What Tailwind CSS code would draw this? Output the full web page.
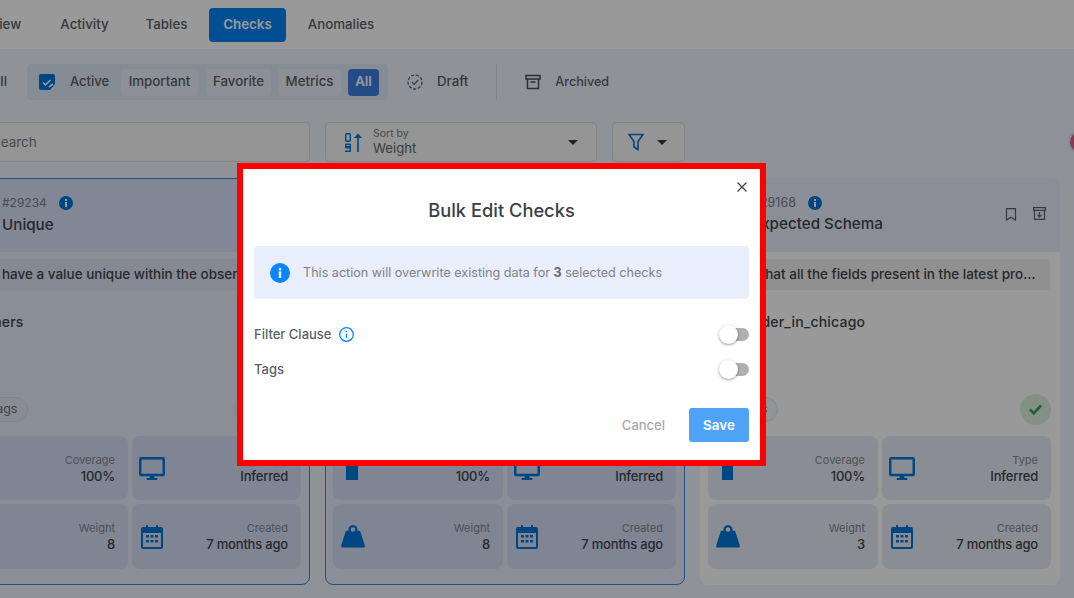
<!doctype html>
<html>
<head>
<meta charset="utf-8">
<script src="https://cdn.jsdelivr.net/npm/@tailwindcss/browser@4"></script>
</head>
<body>
<div class="relative w-[1074px] h-[598px] overflow-hidden bg-[#eff6fc] font-['Inter','Liberation_Sans',sans-serif] text-[#3f444a]">

  <!-- top tabs -->
  <nav class="flex h-[49px] bg-white pt-2 overflow-hidden">
    <div class="flex gap-[7px] ml-[-56px] text-[13.3px] font-medium text-[#5a5f66]">
      <span class="h-[34px] w-[94px] flex items-center justify-center">Overview</span>
      <span class="h-[34px] w-[79px] flex items-center justify-center">Activity</span>
      <span class="h-[34px] w-[71px] flex items-center justify-center">Tables</span>
      <span class="h-[34px] w-[77px] flex items-center justify-center rounded bg-[#0084f4] text-white font-semibold">Checks</span>
      <span class="h-[34px] w-[96px] flex items-center justify-center">Anomalies</span>
    </div>
  </nav>

  <!-- filter row -->
  <div class="flex items-center h-[36px] mt-[15px] text-[13.3px] font-medium text-[#5a5f66]">
    <span class="w-[7px] overflow-hidden flex justify-end mr-[20px] pb-[1px]"><span>All</span></span>
    <div class="flex items-center h-[36px] w-[361px] rounded bg-[#dfe9f7] pl-3">
      <svg class="w-4 h-4 mr-[15px] shrink-0" viewBox="0 0 16 16"><path fill="#0075e0" d="M2 0h12a2 2 0 0 1 2 2v8l-5 6H2a2 2 0 0 1-2-2V2a2 2 0 0 1 2-2z"/><path d="M4 8.500l2.400 2.300L11.500 6" fill="none" stroke="#fff" stroke-width="1.600"/><path d="M10 13l4-3" stroke="#fff" stroke-width="1.600"/></svg>
      <span class="w-[51px] text-[13px] pb-[1px]">Active</span>
      <span class="h-[27px] w-[77px] pb-[1px] rounded bg-[#ebf1fa] flex items-center justify-center">Important</span>
      <span class="h-[27px] w-[65px] pb-[1px] ml-2 rounded bg-[#ebf1fa] flex items-center justify-center">Favorite</span>
      <span class="h-[27px] w-[63px] pb-[1px] ml-[7px] rounded bg-[#ebf1fa] flex items-center justify-center">Metrics</span>
      <span class="h-[27px] w-[31px] pb-[1px] ml-[7px] rounded bg-[#3f7de0] text-white font-semibold flex items-center justify-center">All</span>
    </div>
    <svg class="w-4 h-4 ml-[19px] mr-[14px] shrink-0" viewBox="0 0 16 16" fill="none" stroke="#4f6a8a" stroke-width="1.300"><circle cx="8" cy="8" r="7" stroke-dasharray="3.200 1.600"/><path d="M5 8.200l2.200 2.200L11.200 6"/></svg>
    <span class="pb-[1px]">Draft</span>
    <span class="w-px h-[36px] bg-[#d5dbe2] ml-[28px]"></span>
    <svg class="w-4 h-4 ml-[28px] mr-[14px] shrink-0" viewBox="0 0 16 16" fill="none" stroke="#4a4f55" stroke-width="1.500"><rect x="1" y="1.500" width="14" height="3.500"/><path d="M2.500 5v9.500h11V5M5.500 8h5"/></svg>
    <span class="text-[12.6px]">Archived</span>
  </div>

  <!-- search row -->
  <div class="flex h-[40px] mt-[22px] ml-[-50px] gap-[15px]">
    <div class="w-[360px] rounded border border-[#dcdcdc] bg-[#f9f9f9] flex items-center pl-[41px] text-[13.5px] text-[#777c82]">Search</div>
    <div class="w-[272px] rounded border border-[#dcdcdc] bg-[#f9f9f9] flex items-center pl-[19px] pr-[18px]">
      <svg class="w-[18px] h-[19px] shrink-0" viewBox="0 0 18 19" fill="#0075d8"><rect x=".7" y=".7" width="4.600" height="7.600" rx="1" fill="none" stroke="#0075d8" stroke-width="1.400"/><path fill-rule="evenodd" d="M1 10.500h4a1 1 0 0 1 1 1V18a1 1 0 0 1-1 1H0v-1.400h4.600v-2.100H1a1 1 0 0 1-1-1v-3a1 1 0 0 1 1-1zm.4 1.400v1.200h3.200v-1.200z"/><path d="M13 .5l4 4.500h-3.200v14h-1.600V5H9z"/></svg>
      <div class="ml-[10px] flex flex-col leading-none">
        <span class="text-[10.5px] text-[#777c82] mb-[2px]">Sort by</span>
        <span class="text-[13.2px] text-[#62676d]">Weight</span>
      </div>
      <span class="ml-auto w-0 h-0 border-x-[5px] border-x-transparent border-t-[5px] border-t-[#3a3f44]"></span>
    </div>
    <div class="w-[73px] rounded border border-[#dcdcdc] bg-[#f9f9f9] flex items-center pl-[15px]">
      <svg class="w-4 h-[18px]" viewBox="0 0 16 18" fill="none" stroke="#0075d8" stroke-width="1.600"><path d="M1 1.500h14L10 8.500v8l-4-2.500v-5.500z"/></svg>
      <span class="ml-[13px] w-0 h-0 border-x-[5px] border-x-transparent border-t-[5px] border-t-[#3a3f44]"></span>
    </div>
  </div>

  <!-- cards -->
  <div class="flex items-start mt-[16px] ml-[-50px] gap-[15px]">

    <!-- card 1 -->
    <article class="w-[360px] h-[407px] rounded-lg border border-[#3b82e0] bg-[#e6edfb] overflow-hidden">
      <header class="h-[73px] bg-[#d7e1f8] pl-[51px] pt-[16px]">
        <div class="flex items-center h-[16px] text-[12px] text-[#77808c]">#29234
          <svg class="w-[14px] h-[14px] ml-[12px]" viewBox="0 0 14 14"><circle cx="7" cy="7" r="7" fill="#0075d8"/><rect x="6" y="6" width="2" height="5" fill="#fff"/><rect x="6" y="3" width="2" height="2" fill="#fff"/></svg>
        </div>
        <div class="mt-[3px] text-[15.2px] font-medium text-[#3f444a]">Unique</div>
      </header>
      <div class="mx-[8px] mt-[7px] h-[31px] rounded bg-[#dde5f5] flex items-center pl-[1px] text-[13.5px] font-medium text-[#3f444a] whitespace-nowrap overflow-hidden">Fields have a value unique within the observed set</div>
      <div class="h-[20px] mt-[22px] text-[14px] tracking-[0.2px] font-medium text-[#3f444a] leading-[20px]">customers</div>
      <div class="flex items-center h-[31px] mt-[62px] px-[7px]">
        <span class="w-[70px] h-[25px] rounded-full border border-[#d8dde6] bg-[#e4eaf5] text-[12.5px] text-[#6d7379] flex items-center justify-center">No Tags</span>
        <span class="ml-auto w-[30px] h-[25px] rounded-full bg-[#dfe6f2]"></span>
        <span class="ml-[8px] w-[31px] h-[31px] rounded-full bg-[#dfe6f2]"></span>
      </div>
      <div class="grid grid-cols-[170px_169px] grid-rows-[64px_65px] gap-[4px] mt-[11px] ml-[7px]">
        <div class="rounded-lg bg-[#d4def5] flex items-center pl-[14px] pr-[13px]"><span class="w-[11px] h-[23px] bg-[#0075d8]"></span><div class="ml-auto text-right"><div class="text-[11px] text-[#82878f] leading-[16px]">Coverage</div><div class="text-[13px] tracking-[-0.2px] font-medium text-[#3f444a] leading-[17px]">100%</div></div></div>
        <div class="rounded-lg bg-[#d4def5] flex items-center pl-[7px] pr-[13px]">
          <svg class="w-[26px] h-[23px]" viewBox="0 0 27 24"><path fill="#0075d8" fill-rule="evenodd" d="M2 0h23a2 2 0 0 1 2 2v16a2 2 0 0 1-2 2H16v2h3v2H8v-2h3v-2H2a2 2 0 0 1-2-2V2a2 2 0 0 1 2-2zm.5 2.500v15h22v-15z"/></svg>
          <div class="ml-auto text-right"><div class="text-[11px] text-[#82878f] leading-[16px]">Type</div><div class="text-[13px] tracking-[-0.2px] font-medium text-[#3f444a] leading-[17px]">Inferred</div></div>
        </div>
        <div class="rounded-lg bg-[#d4def5] flex items-center justify-end pr-[13px]"><div class="text-right"><div class="text-[11px] text-[#82878f] leading-[16px]">Weight</div><div class="text-[13px] tracking-[-0.2px] font-medium text-[#3f444a] leading-[17px]">8</div></div></div>
        <div class="rounded-lg bg-[#d4def5] flex items-center pl-[9px] pr-[13px]">
          <svg class="w-[22px] h-[24px]" viewBox="0 0 22 24"><path fill="#0075d8" fill-rule="evenodd" d="M5 0h2v2h8V0h2v2h3a2 2 0 0 1 2 2v18a2 2 0 0 1-2 2H2a2 2 0 0 1-2-2V4a2 2 0 0 1 2-2h3zM2 8v14h18V8z"/><path fill="#0075d8" d="M5 10h3v2.500H5zM9.500 10h3v2.500h-3zM14 10h3v2.500h-3zM5 15h3v2.500H5zM9.500 15h3v2.500h-3zM14 15h3v2.500h-3z"/></svg>
          <div class="ml-auto text-right"><div class="text-[11px] text-[#82878f] leading-[16px]">Created</div><div class="text-[13px] tracking-[-0.2px] font-medium text-[#3f444a] leading-[17px]">7 months ago</div></div>
        </div>
      </div>
    </article>

    <!-- card 2 -->
    <article class="w-[360px] h-[407px] rounded-lg border border-[#3b82e0] bg-[#e6edfb] overflow-hidden">
      <header class="h-[73px] bg-[#d7e1f8]"></header>
      <div class="h-[184px]"></div>
      <div class="grid grid-cols-[170px_169px] grid-rows-[64px_65px] gap-[4px] ml-[7px]">
        <div class="rounded-lg bg-[#d4def5] flex items-center pl-[13px] pr-[13px]"><span class="w-[12px] h-[23px] bg-[#0075d8]"></span><div class="ml-auto text-right"><div class="text-[11px] text-[#82878f] leading-[16px]">Coverage</div><div class="text-[13px] tracking-[-0.2px] font-medium text-[#3f444a] leading-[17px]">100%</div></div></div>
        <div class="rounded-lg bg-[#d4def5] flex items-center pl-[7px] pr-[13px]">
          <svg class="w-[26px] h-[23px]" viewBox="0 0 27 24"><path fill="#0075d8" fill-rule="evenodd" d="M2 0h23a2 2 0 0 1 2 2v16a2 2 0 0 1-2 2H16v2h3v2H8v-2h3v-2H2a2 2 0 0 1-2-2V2a2 2 0 0 1 2-2zm.5 2.500v15h22v-15z"/></svg>
          <div class="ml-auto text-right"><div class="text-[11px] text-[#82878f] leading-[16px]">Type</div><div class="text-[13px] tracking-[-0.2px] font-medium text-[#3f444a] leading-[17px]">Inferred</div></div>
        </div>
        <div class="rounded-lg bg-[#d4def5] flex items-center pl-[8px] pr-[13px]">
          <svg class="w-[24px] h-[23px]" viewBox="0 0 24 23"><path fill="#0075d8" fill-rule="evenodd" d="M12 0a4.500 4.500 0 0 1 4.300 5.800H18c.7 0 1.300.5 1.500 1.100l4.300 13.500c.3 1.100-.4 2.200-1.500 2.200H1.700C.6 22.600-.1 21.500.2 20.400L4.500 6.900C4.700 6.300 5.300 5.800 6 5.800h1.700A4.500 4.500 0 0 1 12 0zm0 2.200a2.300 2.300 0 1 0 0 4.600 2.300 2.300 0 0 0 0-4.600z"/></svg>
          <div class="ml-auto text-right"><div class="text-[11px] text-[#82878f] leading-[16px]">Weight</div><div class="text-[13px] tracking-[-0.2px] font-medium text-[#3f444a] leading-[17px]">8</div></div>
        </div>
        <div class="rounded-lg bg-[#d4def5] flex items-center pl-[9px] pr-[13px]">
          <svg class="w-[22px] h-[24px]" viewBox="0 0 22 24"><path fill="#0075d8" fill-rule="evenodd" d="M5 0h2v2h8V0h2v2h3a2 2 0 0 1 2 2v18a2 2 0 0 1-2 2H2a2 2 0 0 1-2-2V4a2 2 0 0 1 2-2h3zM2 8v14h18V8z"/><path fill="#0075d8" d="M5 10h3v2.500H5zM9.500 10h3v2.500h-3zM14 10h3v2.500h-3zM5 15h3v2.500H5zM9.500 15h3v2.500h-3zM14 15h3v2.500h-3z"/></svg>
          <div class="ml-auto text-right"><div class="text-[11px] text-[#82878f] leading-[16px]">Created</div><div class="text-[13px] tracking-[-0.2px] font-medium text-[#3f444a] leading-[17px]">7 months ago</div></div>
        </div>
      </div>
    </article>

    <!-- card 3 -->
    <article class="w-[360px] h-[407px] rounded-lg bg-white overflow-hidden">
      <header class="relative h-[74px] bg-[#e8edfb] pl-[52px] pt-[17px]">
        <div class="flex items-center h-[16px] text-[12.5px] text-[#77808c]">#29168
          <svg class="w-[14px] h-[14px] ml-[12px]" viewBox="0 0 14 14"><circle cx="7" cy="7" r="7" fill="#0075d8"/><rect x="6" y="6" width="2" height="5" fill="#fff"/><rect x="6" y="3" width="2" height="2" fill="#fff"/></svg>
        </div>
        <div class="mt-[2px] text-[15.2px] font-medium text-[#3f444a]">Expected Schema</div>
        <svg class="absolute left-[305px] top-[30px] w-[12px] h-[13px]" viewBox="0 0 12 13" fill="none" stroke="#5a5f66" stroke-width="1.200"><path d="M1.500 .6h9v11.500L6 9.200 1.500 12.100z"/></svg>
        <svg class="absolute left-[333px] top-[29px] w-[13px] h-[13px]" viewBox="0 0 13 13" fill="none" stroke="#5a5f66" stroke-width="1.200"><rect x=".6" y=".6" width="11.800" height="2.800"/><path d="M1.500 3.400v9h10v-9M6.500 5v5M4.500 8l2 2 2-2"/></svg>
      </header>
      <div class="mx-[10px] mt-[7px] h-[31px] rounded bg-[#f0f0f0] flex items-center pl-[5px] pr-[10px] text-[13.5px] font-medium text-[#3f444a] whitespace-nowrap overflow-hidden"><span class="truncate">Assert that all the fields present in the latest profile operation</span></div>
      <div class="h-[20px] mt-[22px] pl-[5px] text-[14px] tracking-[0.2px] font-medium text-[#3f444a] leading-[20px]">sales_order_in_chicago</div>
      <div class="flex items-center h-[31px] mt-[62px] pl-[8px] pr-[9px]">
        <span class="w-[70px] h-[25px] rounded-full border border-[#dfe3ea] bg-[#f3f5f9] text-[12.5px] text-[#6d7379] flex items-center justify-center">No Tags</span>
        <span class="ml-auto w-[31px] h-[31px] rounded-full bg-[#dcefe0] flex items-center justify-center">
          <svg class="w-[13px] h-[11px]" viewBox="0 0 13 11" fill="none" stroke="#2ea44f" stroke-width="2.600"><path d="M1 5.500l3.800 3.800L12 1.500"/></svg>
        </span>
      </div>
      <div class="grid grid-cols-[170px_169px] grid-rows-[64px_65px] gap-[4px] mt-[11px] ml-[8px]">
        <div class="rounded-lg bg-[#e7ecf7] flex items-center pl-[14px] pr-[13px]"><span class="w-[11px] h-[23px] bg-[#0075d8]"></span><div class="ml-auto text-right"><div class="text-[11px] text-[#82878f] leading-[16px]">Coverage</div><div class="text-[13px] tracking-[-0.2px] font-medium text-[#3f444a] leading-[17px]">100%</div></div></div>
        <div class="rounded-lg bg-[#e7ecf7] flex items-center pl-[7px] pr-[13px]">
          <svg class="w-[26px] h-[23px]" viewBox="0 0 27 24"><path fill="#0075d8" fill-rule="evenodd" d="M2 0h23a2 2 0 0 1 2 2v16a2 2 0 0 1-2 2H16v2h3v2H8v-2h3v-2H2a2 2 0 0 1-2-2V2a2 2 0 0 1 2-2zm.5 2.500v15h22v-15z"/></svg>
          <div class="ml-auto text-right"><div class="text-[11px] text-[#82878f] leading-[16px]">Type</div><div class="text-[13px] tracking-[-0.2px] font-medium text-[#3f444a] leading-[17px]">Inferred</div></div>
        </div>
        <div class="rounded-lg bg-[#e7ecf7] flex items-center pl-[8px] pr-[13px]">
          <svg class="w-[24px] h-[23px]" viewBox="0 0 24 23"><path fill="#0075d8" fill-rule="evenodd" d="M12 0a4.500 4.500 0 0 1 4.300 5.800H18c.7 0 1.300.5 1.500 1.100l4.300 13.500c.3 1.100-.4 2.200-1.500 2.200H1.700C.6 22.600-.1 21.500.2 20.400L4.500 6.900C4.700 6.300 5.300 5.800 6 5.800h1.700A4.500 4.500 0 0 1 12 0zm0 2.200a2.300 2.300 0 1 0 0 4.600 2.300 2.300 0 0 0 0-4.600z"/></svg>
          <div class="ml-auto text-right"><div class="text-[11px] text-[#82878f] leading-[16px]">Weight</div><div class="text-[13px] tracking-[-0.2px] font-medium text-[#3f444a] leading-[17px]">3</div></div>
        </div>
        <div class="rounded-lg bg-[#e7ecf7] flex items-center pl-[9px] pr-[13px]">
          <svg class="w-[22px] h-[24px]" viewBox="0 0 22 24"><path fill="#0075d8" fill-rule="evenodd" d="M5 0h2v2h8V0h2v2h3a2 2 0 0 1 2 2v18a2 2 0 0 1-2 2H2a2 2 0 0 1-2-2V4a2 2 0 0 1 2-2h3zM2 8v14h18V8z"/><path fill="#0075d8" d="M5 10h3v2.500H5zM9.500 10h3v2.500h-3zM14 10h3v2.500h-3zM5 15h3v2.500H5zM9.500 15h3v2.500h-3zM14 15h3v2.500h-3z"/></svg>
          <div class="ml-auto text-right"><div class="text-[11px] text-[#82878f] leading-[16px]">Created</div><div class="text-[13px] tracking-[-0.2px] font-medium text-[#3f444a] leading-[17px]">7 months ago</div></div>
        </div>
      </div>
    </article>
  </div>

  <!-- avatar peeking at the edge -->
  <span class="absolute left-[1070px] top-[132px] w-[20px] h-[20px] rounded-full bg-[#e0608c] ring-2 ring-[#dfe3f5]"></span>

  <!-- dim layer -->
  <div class="absolute inset-0 bg-black/40"></div>

  <!-- modal -->
  <section class="absolute left-[237px] top-[163px] w-[529px] h-[303px] border-[6px] border-[#ff0000] bg-white flex flex-col px-[11px]">
    <button class="absolute right-[13px] top-[13px] w-[10px] h-[10px]">
      <svg class="w-[10px] h-[10px] block" viewBox="0 0 10 10" stroke="#3a3f44" stroke-width="1.200"><path d="M.5.500l9 9M9.500.500l-9 9"/></svg>
    </button>
    <h2 class="mt-[29px] h-[24px] leading-[24px] text-center text-[18.300px] font-medium text-[#3a3f44]">Bulk Edit Checks</h2>
    <div class="mt-[24px] h-[53px] rounded bg-[#e8eefb] flex items-center pl-[16px] text-[12.600px] text-[#7d8288]">
      <svg class="w-[20px] h-[20px] mr-[13px] shrink-0" viewBox="0 0 20 20"><circle cx="10" cy="10" r="10" fill="#0a84ff"/><rect x="8.800" y="8.500" width="2.400" height="6.500" fill="#fff"/><rect x="8.800" y="5" width="2.400" height="2.400" fill="#fff"/></svg>
      <span class="pt-[1px]">This action will overwrite existing data for <b class="font-bold text-[#62676d]">3</b> selected checks</span>
    </div>
    <div class="mt-[25px] h-[20px] flex items-center text-[13px] font-medium text-[#5a5f66]">
      <span class="pt-[1px]">Filter Clause</span>
      <svg class="w-[15px] h-[15px] ml-[8px]" viewBox="0 0 15 15" fill="none" stroke="#0a84ff" stroke-width="1.300"><circle cx="7.500" cy="7.500" r="6.800"/><path d="M7.500 6.500v4.500M7.500 3.800v1.400"/></svg>
      <span class="relative ml-auto w-[28px] h-[13px] rounded-full bg-[#b0b0b0]"><span class="absolute left-[-2px] top-[-3px] w-[19px] h-[19px] rounded-full bg-white shadow-[0_1px_3px_rgba(0,0,0,0.4)]"></span></span>
    </div>
    <div class="mt-[15px] h-[20px] flex items-center text-[13px] font-medium text-[#5a5f66]">
      <span class="pt-[1px]">Tags</span>
      <span class="relative ml-auto w-[28px] h-[13px] rounded-full bg-[#b0b0b0]"><span class="absolute left-[-2px] top-[-3px] w-[19px] h-[19px] rounded-full bg-white shadow-[0_1px_3px_rgba(0,0,0,0.4)]"></span></span>
    </div>
    <div class="mt-[29px] flex items-center justify-end">
      <span class="pt-[1px] text-[13px] font-medium text-[#a8a8a8]">Cancel</span>
      <button class="ml-[24px] w-[60px] h-[34px] rounded-[3px] bg-[#4fa3f5] text-white text-[13.500px] font-semibold">Save</button>
    </div>
  </section>
</div>
</body>
</html>
